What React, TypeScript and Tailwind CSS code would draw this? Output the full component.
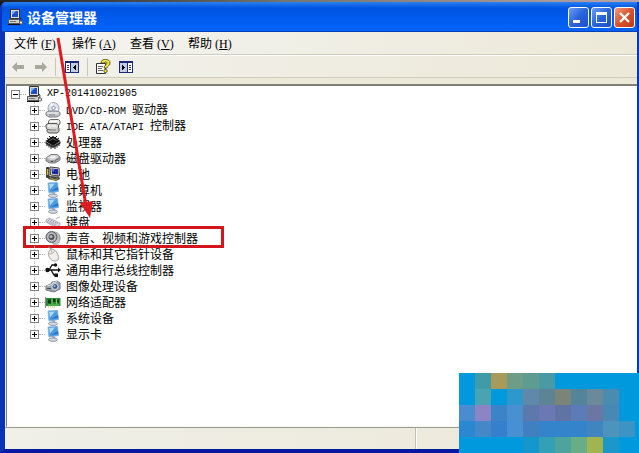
import type { ReactNode } from "react";

type IconName =
  | "computer"
  | "disc"
  | "ide"
  | "cpu"
  | "disk"
  | "battery"
  | "monitor"
  | "keyboard"
  | "sound"
  | "mouse"
  | "usb"
  | "camera"
  | "network";

type Device = {
  icon: IconName;
  latin?: string;
  name: string;
  marked?: boolean;
};

const devices: Device[] = [
  { icon: "disc", latin: "DVD/CD-ROM ", name: "驱动器" },
  { icon: "ide", latin: "IDE ATA/ATAPI ", name: "控制器" },
  { icon: "cpu", name: "处理器" },
  { icon: "disk", name: "磁盘驱动器" },
  { icon: "battery", name: "电池" },
  { icon: "monitor", name: "计算机" },
  { icon: "monitor", name: "监视器" },
  { icon: "keyboard", name: "键盘" },
  { icon: "sound", name: "声音、视频和游戏控制器", marked: true },
  { icon: "mouse", name: "鼠标和其它指针设备" },
  { icon: "usb", name: "通用串行总线控制器" },
  { icon: "camera", name: "图像处理设备" },
  { icon: "network", name: "网络适配器" },
  { icon: "monitor", name: "系统设备" },
  { icon: "monitor", name: "显示卡" },
];

const menus = [
  { name: "文件", key: "F" },
  { name: "操作", key: "A" },
  { name: "查看", key: "V" },
  { name: "帮助", key: "H" },
];

const mosaic = [
  ["", "#3d9ca8", "#a89a58", "#6f9c85", "#5f9c90", "#4a9aa5"],
  ["", "#4aa3b0", "", "#2e98cc", "#6088a8", "#5c8494", "#7a8478", "#54849a", "#6a8a9c", "#4a8cb0"],
  ["#4a8cd0", "#8c84c4", "#3c84c8", "#4890d0", "#5c78ac", "#6c78b4", "#6074a4", "#5c7cb8", "#6c76a4", "#4888b4"],
  ["#2a88d0", "#4488c8", "#3480cc", "#4890d4", "#4080c0", "#3484cc", "#3484cc", "#3484cc", "#4084c0", "#4c94bc", "#3c94c4"],
  ["", "", "", "", "#1498cc", "#34a0b8", "#4ca49c", "#68ac88", "#a0b450", "#1c98c8"],
];

const drawings: Record<IconName, ReactNode> = {
  computer: (
    <>
      <path d="M3.500 .5h9v9h-9z" fill="#dcdcd0" stroke="#333" />
      <path d="M5 2h6v6H5z" fill="#1c50c8" />
      <path d="M5 2h4L5 6z" fill="#7fb0f4" />
      <path d="M1.500 10.500h10l2 2v2h-12z" fill="#d4d0c8" stroke="#555" />
      <path d="M1 15.500h12" stroke="#111" />
      <path d="M3 12.500h6" stroke="#777" />
      <path d="M13 8c2 1 0 3 1 4" stroke="#333" fill="none" />
      <rect x="12.500" y="12" width="3" height="3" rx="1" fill="#eee" stroke="#555" />
    </>
  ),
  disc: (
    <>
      <circle cx="8.500" cy="6" r="5.500" fill="#dfe4ee" stroke="#9aa2b4" />
      <path d="M8.500 6 5 2l2-1.200zM8.500 6l4 3.500.7-2z" fill="#fff" />
      <circle cx="8.500" cy="6" r="1.600" fill="#fff" stroke="#8890a4" />
      <path d="M1 10.500 4 9h8l3 1.500v2.500l-3 2H4l-3-2z" fill="#c4c6cc" stroke="#777c88" />
      <path d="M2 11h12" stroke="#f4f4f4" />
      <path d="M4 13h6" stroke="#777c88" />
    </>
  ),
  ide: (
    <>
      <path d="M3.500 5V3l2-1.500h8l1.500 1.500v3l-2 1.500H4z" fill="#e8e8e4" stroke="#666" />
      <path d="M1 9V7l2-1.500h9L13.500 7v3L12 11.500H2z" fill="#d8d8d4" stroke="#555" />
      <path d="M2 12v1.500L4 15h8l2-1.500V10" fill="#c4c4c0" stroke="#555" />
      <path d="M3 8h8M5 3.500h7" stroke="#fff" />
      <path d="M4 12h7" stroke="#888" />
    </>
  ),
  cpu: (
    <>
      <path d="M8 2 15.500 7 8 12 .5 7z" fill="#101010" />
      <path d="M.5 7.500v2L8 14l7.500-4.500v-2L8 12z" fill="#2a2a2a" />
      <path d="m4 2 2 2M2 4l2 1.500M12 2l-2 2M14 4l-2 1.500M2 9.500V12M4 11v2.500M6 12v3M10 12v3M12 11v2.500M14 9.500V12" stroke="#111" />
      <path d="m4.500 6.500 3.500-2 3.500 2" stroke="#666" fill="none" />
    </>
  ),
  disk: (
    <>
      <path d="m1 8 5-3.500h6L15 7v3l-5 3H5L1 11z" fill="#a4a4a8" stroke="#808084" />
      <path d="m1.500 8 5-3h5L14.500 7l-5 3H5z" fill="#d4d4d8" />
      <ellipse cx="8" cy="7" rx="3" ry="1.300" fill="#f4f4f8" />
      <path d="M10 12v-1.500l4-2.500" stroke="#6c6c74" fill="none" />
      <path d="M6 11.500h2" stroke="#444" />
    </>
  ),
  battery: (
    <>
      <path d="m5 1 9 1 .5 8-9-1z" fill="#e4e0d0" stroke="#444" />
      <path d="m6.500 2.500 6.500.7.3 5.300-6.300-.8z" fill="#1a28a0" />
      <path d="m7 3 3 .4L8 6z" fill="#6680dc" />
      <path d="m4 10 10 .5 1 2.500-4 2-8-2z" fill="#484848" />
      <rect x="1" y="1" width="3.500" height="11" rx="1" fill="#3c3c3c" />
      <path d="M2.500 3v6" stroke="#d8b430" strokeWidth="1.500" />
      <path d="M5 11.500c4 4 8 1 8 1" stroke="#c8b030" fill="none" />
    </>
  ),
  monitor: (
    <>
      <path d="m3 1 9.500-.5 1 9-9.500 1.500z" fill="#4c9ce4" stroke="#8ab4dc" />
      <path d="m4 2 6-.4-5 6z" fill="#a4dcfc" />
      <path d="m6 9 7-1-.3-3z" fill="#2474cc" />
      <path d="m7 10.500 3-.3.500 3H7z" fill="#a0acbc" />
      <ellipse cx="8" cy="13.700" rx="4.500" ry="1.700" fill="#d4dae4" stroke="#8c98ac" />
    </>
  ),
  keyboard: (
    <>
      <path d="m1 6 3-2 11 5v2l-4 2.500L1 8z" fill="#d8d8e0" stroke="#b0b0bc" />
      <path d="m3 6.500 8.500 4.200M4.500 5.500l8.500 4.200M2 7.500l8.500 4.200" stroke="#8c8ca0" strokeDasharray="1 1" />
      <path d="M11 5c1-2 3-1 4-2" stroke="#b4b4c0" fill="none" />
    </>
  ),
  sound: (
    <>
      <path d="M9 2c4 0 6 3 6 6s-1 5-3 6H8z" fill="#c4c4c8" stroke="#94949c" />
      <circle cx="6.500" cy="7" r="5.500" fill="#a0a0a4" stroke="#606068" />
      <circle cx="6.500" cy="7" r="3.700" fill="#505058" stroke="#d8d8dc" />
      <circle cx="6" cy="6.500" r="1.600" fill="#b8b8c0" />
      <path d="m11 13 3 2M13 11l2 1" stroke="#c4c4c8" />
    </>
  ),
  mouse: (
    <>
      <path d="M3 1c3-1 1 3 4 2" stroke="#888" fill="none" />
      <path d="M4 5c2-3 6-2 8 2 3 5 2 8-2 8-5 0-8-6-6-10z" fill="#f2eeea" stroke="#a8a4a0" />
      <path d="M4 8c3 0 5-1 6-4M7 7 6 4" stroke="#b8b2ae" fill="none" />
      <path d="M12 8c2 4 1 6-2 6.500" stroke="#d4ceca" fill="none" />
    </>
  ),
  usb: (
    <>
      <path d="M2 8h12M4 8l3-5h3M6 8l3 5h2" stroke="#111" strokeWidth="1.300" fill="none" />
      <circle cx="2.500" cy="8" r="2.200" fill="#111" />
      <path d="m13 5.500 3 2.500-3 2.500z" fill="#111" />
      <circle cx="10.500" cy="3" r="1.700" fill="#111" />
      <rect x="9.500" y="11.500" width="3.500" height="3.500" fill="#111" />
    </>
  ),
  camera: (
    <>
      <path d="m1 8 5-2 1-2 5-1 3 2v6l-6 3-8-2z" fill="#9ca4b0" stroke="#707884" />
      <path d="m2 8 5-1.500 1-2 4-1" stroke="#e4e8ee" fill="none" />
      <circle cx="10" cy="8.500" r="3" fill="#405c80" stroke="#dce0e8" />
      <circle cx="9.500" cy="8" r="1" fill="#9cc4ec" />
      <path d="M2 10.500h4" stroke="#444c58" />
    </>
  ),
  network: (
    <>
      <path d="M1 4h14.500v8H1z" fill="#2c8a34" />
      <path d="M.5 3v11" stroke="#888" />
      <path d="M3 5.500h3v4H3zM8 5h2.500v3H8zM12 5.500h2v3h-2z" fill="#123c18" />
      <path d="M3 11h11M7 5v5M11.500 5v5" stroke="#74cc60" />
      <path d="M3 13h8" stroke="#b8a43c" strokeDasharray="1 1" />
    </>
  ),
};

function Icon({ name }: { name: IconName }) {
  return (
    <svg className="size-4 shrink-0" viewBox="0 0 16 16" fill="none" aria-hidden="true">
      {drawings[name]}
    </svg>
  );
}

function Expander({ open, label }: { open?: boolean; label: string }) {
  return (
    <button
      type="button"
      aria-label={label}
      aria-expanded={!!open}
      className="flex size-[9px] shrink-0 items-center justify-center border border-[#848484] bg-white"
    >
      <svg className="size-[5px]" viewBox="0 0 5 5" shapeRendering="crispEdges" aria-hidden="true">
        <path d={open ? "M0 2h5v1H0z" : "M0 2h5v1H0zM2 0h1v5H2z"} fill="#000" />
      </svg>
    </button>
  );
}

function DeviceRow({ device, last }: { device: Device; last: boolean }) {
  return (
    <li className="relative flex h-4 items-center">
      <div className="flex h-4 w-[9px] flex-col items-center">
        <span className="h-1 border-l border-dotted border-[#c4c4c4]" />
        <Expander label={device.name} />
        <span className={last ? "h-[3px]" : "h-[3px] border-l border-dotted border-[#c4c4c4]"} />
      </div>
      <span className="w-[6px] border-t border-dotted border-[#b0b0b0]" />
      <Icon name={device.icon} />
      <span className="ml-[5px] whitespace-pre">
        {device.latin ? <span className="font-['Liberation_Mono',monospace] text-[10px]">{device.latin}</span> : null}
        {device.name}
      </span>
      {device.marked ? (
        <span className="absolute -top-1 -left-[7px] h-[22px] w-[201px] border-[3px] border-[#d4161c]" />
      ) : null}
    </li>
  );
}

function PaneIcon({ flip }: { flip?: boolean }) {
  return (
    <svg className="h-3 w-[14px]" viewBox="0 0 14 12" aria-hidden="true" shapeRendering="crispEdges">
      <path d="M0 0h14v12H0z" fill="#1c2878" />
      <path d="M1 2h12v9H1z" fill="#fff" />
      {flip ? (
        <>
          <path d="M1 2h7v9H1z" fill="#c4cce4" />
          <path d="M8 2h1v9H8z" fill="#1c2878" />
          <path d="M10 4h2v1h-2zM10 6h2v1h-2zM10 8h2v1h-2z" fill="#333" />
          <path d="M3 4h1v5H3zM4 5h1v3H4zM5 6h1v1H5z" fill="#000" />
        </>
      ) : (
        <>
          <path d="M6 2h7v9H6z" fill="#c4cce4" />
          <path d="M5 2h1v9H5z" fill="#1c2878" />
          <path d="M2 4h2v1H2zM2 6h2v1H2zM2 8h2v1H2z" fill="#333" />
          <path d="M10 4h1v5h-1zM9 5h1v3H9zM8 6h1v1H8z" fill="#000" />
        </>
      )}
    </svg>
  );
}

function ArrowIcon({ flip }: { flip?: boolean }) {
  return (
    <svg className="h-[10px] w-3" viewBox="0 0 12 10" aria-hidden="true">
      <path d={flip ? "M12 5 7 0v3H0v4h7v3z" : "M0 5l5-5v3h7v4H5v3z"} fill="#aaa89c" />
    </svg>
  );
}

function HelpIcon() {
  return (
    <svg className="size-4" viewBox="0 0 16 16" aria-hidden="true">
      <path d="M1.500 4.500h9v10h-9z" fill="#fff" stroke="#333" />
      <path d="M3 7.500h5M3 9.500h4M3 11.500h5" stroke="#666" />
      <path d="M6 4c0-5 9-5 9 0 0 3-3 3-3 5H9c0-3 3-3 3-5 0-1.500-2.500-1.500-2.500 0z" fill="#f4e840" stroke="#443c08" strokeWidth=".8" />
      <circle cx="10.500" cy="12" r="1.700" fill="#f4e840" stroke="#443c08" strokeWidth=".8" />
    </svg>
  );
}

export default function App() {
  return (
    <div className="relative flex min-h-screen flex-col overflow-hidden bg-[#141418] pt-[2px] font-['Noto_Sans_CJK_SC',sans-serif] text-xs leading-4 text-black">
      {/* strip of desktop above the window */}
      <div className="absolute inset-x-0 top-0 h-[2px] bg-linear-to-r from-[#222228] via-[#77756c] via-45% to-[#b8a4a8]" />

      <div className="flex flex-1 flex-col rounded-tl-md border-r-2 border-b-4 border-l-[5px] border-r-[#0838b8] border-b-[#0418a0] border-l-[#0a34b8] bg-[#ece9d8]">
        <header className="-ml-[3px] flex h-[30px] items-center rounded-tl bg-linear-to-b from-[#2a80f0] via-[#0054e3] via-20% to-[#0364fc] pr-[2px] pl-[5px] shadow-[inset_0_-1px_0_#0440b8]">
          <Icon name="computer" />
          <h1 className="ml-1 flex-1 text-sm font-bold text-white">设备管理器</h1>
          <div className="flex gap-[2px]">
            <button type="button" aria-label="最小化" className="size-[21px] rounded-[3px] border border-white bg-linear-to-br from-[#6c9cf4] via-[#2a62dc] to-[#1c50cc]">
              <svg viewBox="0 0 19 19" aria-hidden="true">
                <path d="M4 12h7v3H4z" fill="#fff" />
              </svg>
            </button>
            <button type="button" aria-label="最大化" className="size-[21px] rounded-[3px] border border-white bg-linear-to-br from-[#6c9cf4] via-[#2a62dc] to-[#1c50cc]">
              <svg viewBox="0 0 19 19" aria-hidden="true">
                <path d="M4 4h11v11H4zM5 7v7h9V7z" fill="#fff" fillRule="evenodd" />
              </svg>
            </button>
            <button type="button" aria-label="关闭" className="size-[21px] rounded-[3px] border border-white bg-linear-to-br from-[#f0987c] via-[#d8532c] to-[#c03c14]">
              <svg viewBox="0 0 19 19" aria-hidden="true">
                <path d="m5 5 9 9M14 5l-9 9" stroke="#fff" strokeWidth="2.300" />
              </svg>
            </button>
          </div>
        </header>

        <nav className="flex h-[23px] items-center gap-4 border-b border-[#cfccbc] bg-linear-to-r from-[#f4f4f2] to-[#ece9d8] pl-[9px]">
          {menus.map((menu) => (
            <button key={menu.key} type="button" className="w-[42px] text-left whitespace-nowrap">
              {menu.name}
              <span className="ml-[3px] font-['Liberation_Serif',serif]">
                (<u>{menu.key}</u>)
              </span>
            </button>
          ))}
        </nav>

        <div className="flex h-[23px] items-center border-t border-b border-t-white border-b-[#cfccbc] bg-linear-to-r from-[#f2f1ec] to-[#ece9d8] pl-[7px]">
          <button type="button" aria-label="后退"><ArrowIcon /></button>
          <button type="button" aria-label="前进" className="ml-[11px]"><ArrowIcon flip /></button>
          <span className="ml-2 h-[18px] border-l border-[#cac7b6]" />
          <button type="button" aria-label="显示/隐藏控制台树" className="ml-[9px]"><PaneIcon /></button>
          <span className="ml-2 h-[18px] border-l border-[#cac7b6]" />
          <button type="button" aria-label="帮助" className="ml-[7px]"><HelpIcon /></button>
          <button type="button" aria-label="显示/隐藏操作窗格" className="ml-2"><PaneIcon flip /></button>
        </div>

        <main className="mt-[6px] ml-px flex-1 border-t-2 border-b border-l border-[#808078] border-b-[#f8f8f4] bg-white">
          <div className="flex h-4 items-center pl-1">
            <Expander open label="XP-201410021905" />
            <span className="w-[6px] border-t border-dotted border-[#b0b0b0]" />
            <Icon name="computer" />
            <span className="ml-[5px] font-['Liberation_Mono',monospace] text-[10px]">XP-201410021905</span>
          </div>
          <ul className="pl-[23px]">
            {devices.map((device, i) => (
              <DeviceRow key={device.name} device={device} last={i === devices.length - 1} />
            ))}
          </ul>
        </main>

        <footer className="flex h-[22px] border-t border-[#9c9a8c] bg-linear-to-r from-[#f0efe8] to-[#ece9d8]">
          <span className="w-[65%] border-r border-[#c4c1b0]" />
          <span className="flex-1 border-l border-white" />
        </footer>
      </div>

      {/* pointer to the sound devices row */}
      <svg className="pointer-events-none absolute top-9 left-14 h-[184px] w-10" viewBox="0 0 40 184" aria-hidden="true">
        <path d="m2 2 28 168" stroke="#dc1c20" strokeWidth="3" />
        <path d="m24 167 13-2-3 17z" fill="#dc1c20" />
      </svg>

      <svg className="absolute right-0 bottom-0 h-20 w-[180px]" viewBox="0 0 180 80" shapeRendering="crispEdges" aria-hidden="true">
        <rect width="180" height="80" fill="#0099de" />
        {mosaic.map((row, y) =>
          row.map((color, x) =>
            color ? <rect key={`${x}-${y}`} x={x * 16} y={y * 16} width="16" height="16" fill={color} /> : null,
          ),
        )}
      </svg>
    </div>
  );
}
